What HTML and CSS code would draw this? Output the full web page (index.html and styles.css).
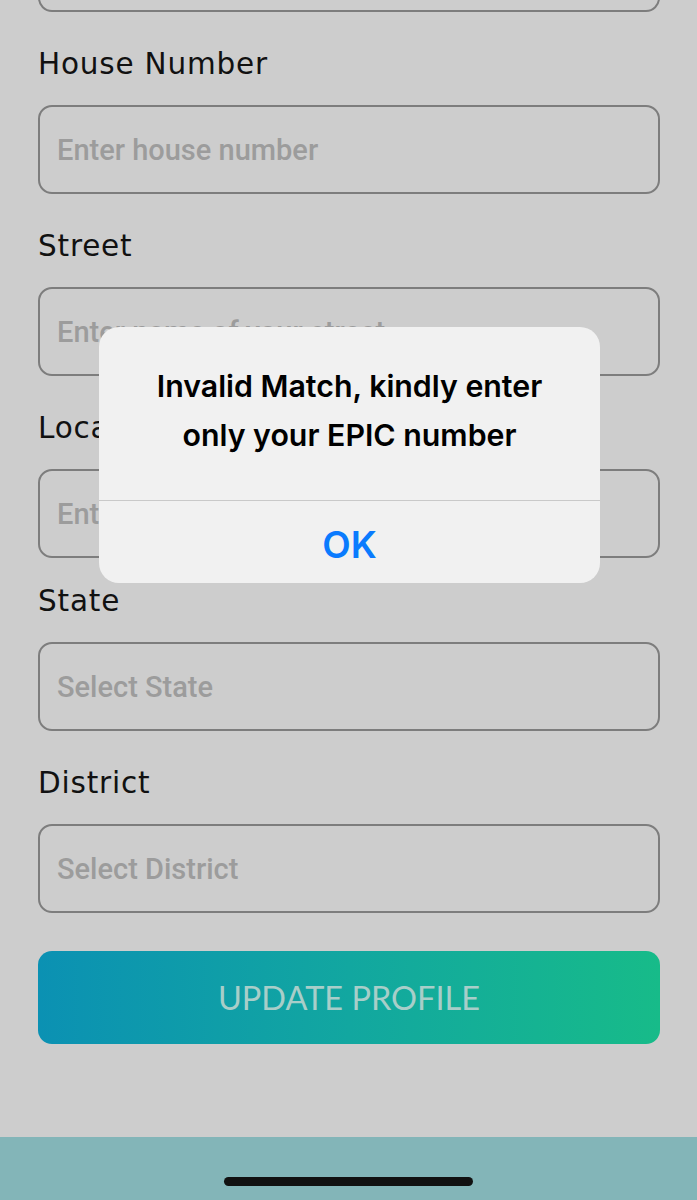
FILE: index.html
```html
<!DOCTYPE html>
<html lang="en">
<head>
<meta charset="utf-8">
<title>Update Profile</title>
<link rel="stylesheet" href="styles.css">
</head>
<body>
<div class="screen">
  <div class="form">
    <div class="input input-cut"></div>

    <div class="field">
      <div class="label">House Number</div>
      <div class="input"><span class="placeholder">Enter house number</span></div>
    </div>

    <div class="field">
      <div class="label">Street</div>
      <div class="input"><span class="placeholder">Enter name of your street</span></div>
    </div>

    <div class="field">
      <div class="label">Locality</div>
      <div class="input"><span class="placeholder">Enter your locality</span></div>
    </div>

    <div class="field field-tight">
      <div class="label">State</div>
      <div class="input"><span class="placeholder">Select State</span></div>
    </div>

    <div class="field">
      <div class="label">District</div>
      <div class="input"><span class="placeholder">Select District</span></div>
    </div>

    <div class="button">UPDATE PROFILE</div>
  </div>

  <div class="bottom-bar">
    <div class="home-indicator"></div>
  </div>

  <div class="alert">
    <div class="alert-message">Invalid Match, kindly enter<br>only your EPIC number</div>
    <div class="alert-action">OK</div>
  </div>
</div>
</body>
</html>
```

FILE: styles.css
```css
html, body {
  margin: 0;
  padding: 0;
}

body {
  background: #cdcdcd;
  font-family: "DejaVu Sans", sans-serif;
}

.screen {
  position: relative;
  width: 697px;
  height: 1200px;
  overflow: hidden;
  display: flex;
  flex-direction: column;
  background: #cdcdcd;
}

.form {
  padding: 0 37px 0 38px;
  display: flex;
  flex-direction: column;
}

.input {
  box-sizing: border-box;
  height: 89px;
  border: 2px solid #7d7d7d;
  border-radius: 14px;
  display: flex;
  align-items: center;
  padding-left: 17px;
}

.input-cut {
  margin-top: -77px;
}

.placeholder {
  font-family: Roboto, "Liberation Sans", sans-serif;
  font-size: 29px;
  font-weight: 500;
  color: #9c9c9c;
  white-space: nowrap;
}

.field {
  margin-top: 34px;
  display: flex;
  flex-direction: column;
}

.field-tight {
  margin-top: 25px;
}

.label {
  font-family: "DejaVu Sans", sans-serif;
  font-size: 29.5px;
  letter-spacing: 0.8px;
  line-height: 36px;
  height: 36px;
  color: #111;
  margin-bottom: 23px;
}

.button {
  margin-top: 38px;
  height: 93px;
  border-radius: 14px;
  background: linear-gradient(90deg, #0b91b3 0%, #12a7a0 50%, #17bb89 100%);
  color: #a8cec9;
  font-family: Lato, sans-serif;
  font-size: 32.5px;
  display: flex;
  align-items: center;
  justify-content: center;
}

.bottom-bar {
  margin-top: auto;
  height: 63px;
  background: #83b5b8;
  display: flex;
  justify-content: center;
}

.home-indicator {
  margin-top: 40px;
  width: 249px;
  height: 9px;
  border-radius: 5px;
  background: #111;
}

.alert {
  position: absolute;
  left: 99px;
  top: 327px;
  width: 501px;
  height: 256px;
  border-radius: 20px;
  background: #f1f1f1;
  display: flex;
  flex-direction: column;
  font-family: Inter, "Liberation Sans", sans-serif;
}

.alert-message {
  height: 174px;
  box-sizing: border-box;
  padding-top: 35px;
  border-bottom: 1px solid #c9c9c9;
  text-align: center;
  font-size: 30.3px;
  font-weight: 600;
  line-height: 49px;
  color: #000;
}

.alert-action {
  flex: 1;
  box-sizing: border-box;
  padding-top: 6px;
  text-align: center;
  font-size: 37px;
  font-weight: 600;
  line-height: 75px;
  color: #0a7bfe;
}
```
